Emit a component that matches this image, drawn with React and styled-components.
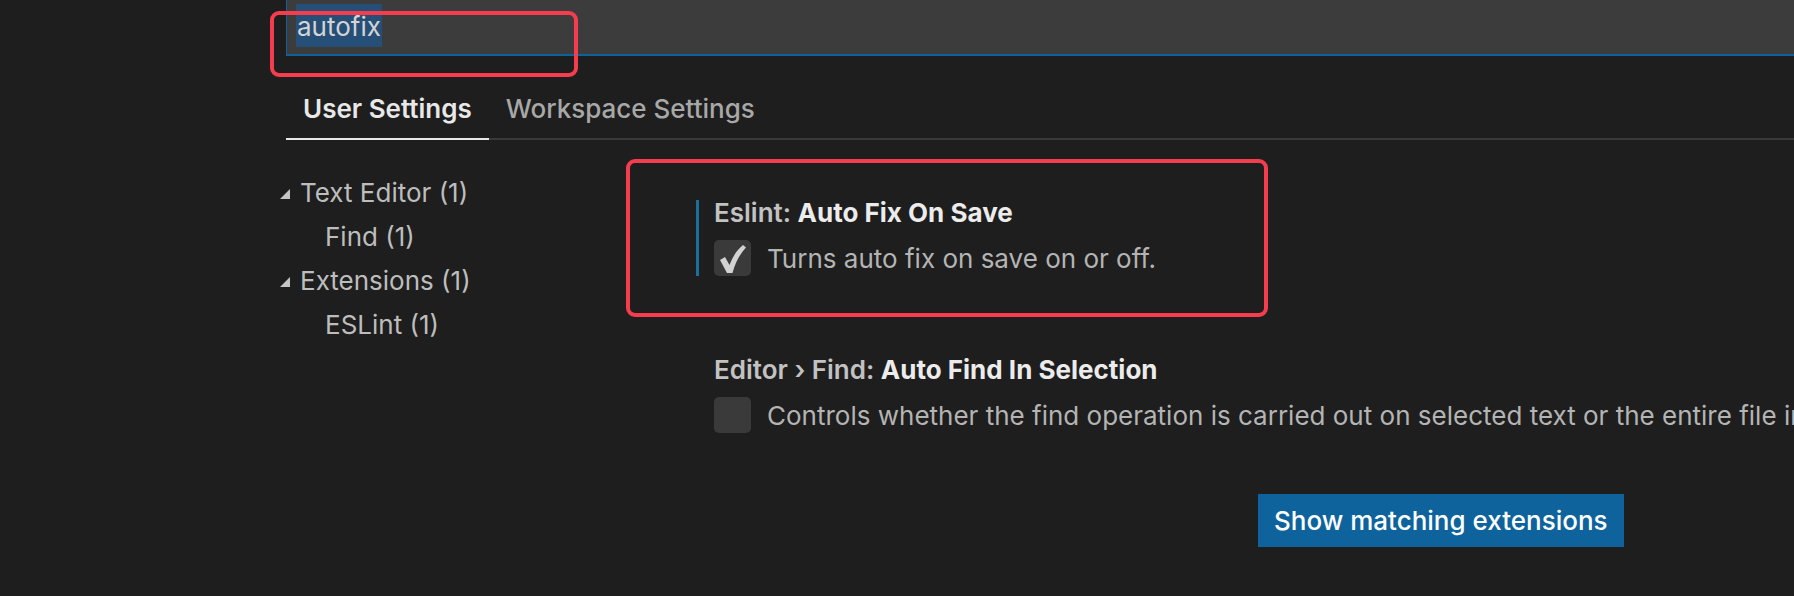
import React from "react";
import styled, { createGlobalStyle } from "styled-components";

const Global = createGlobalStyle`
  html, body {
    margin: 0;
    padding: 0;
    background: #1e1e1e;
  }
  * {
    box-sizing: border-box;
  }
`;

const Page = styled.div`
  position: relative;
  width: 1794px;
  height: 596px;
  overflow: hidden;
  background: #1e1e1e;
  font-family: Inter, "Noto Sans", "Liberation Sans", sans-serif;
  font-size: 26px;
  color: #cccccc;
`;

const SearchBar = styled.div`
  margin-left: 286px;
  height: 56px;
  background: #3c3c3c;
  border-left: 1px solid #0e639c;
  border-bottom: 2px solid #0e639c;
  padding: 4px 0 0 9px;
`;

const Selected = styled.span`
  display: inline-block;
  line-height: 40px;
  padding: 3px 1px 0;
  background: #264f78;
  color: #d4d4d4;
`;

const Tabs = styled.div`
  display: flex;
  margin: 20px 0 0 286px;
  border-bottom: 2px solid #3a3a3a;
`;

const Tab = styled.div`
  height: 64px;
  line-height: 66px;
  padding: 0 17px;
  margin-bottom: -2px;
  color: ${(p) => (p.$active ? "#e8e8e8" : "#a8a8a8")};
  font-weight: ${(p) => (p.$active ? 600 : 500)};
  border-bottom: 2px solid ${(p) => (p.$active ? "#e8e8e8" : "transparent")};
`;

const Body = styled.div`
  display: flex;
  margin-top: 28px;
`;

const Tree = styled.div`
  width: 417px;
  margin-left: 279px;
  padding-top: 2px;
  flex-shrink: 0;
`;

const TreeRow = styled.div`
  display: flex;
  align-items: center;
  height: 44px;
  padding-left: ${(p) => p.$indent}px;
  color: #bdbdbd;
  white-space: nowrap;
`;

const Twistie = styled.svg`
  width: 12px;
  height: 12px;
  margin: 4px 9px 0 0;
  fill: #c5c5c5;
`;

const Main = styled.div`
  display: flex;
  flex-direction: column;
  padding-top: 32px;
  min-width: 0;
`;

const Setting = styled.div`
  display: flex;
  flex-direction: column;
  gap: 14px;
  padding-left: 15px;
  margin-bottom: ${(p) => p.$gap || 0}px;
  border-left: 3px solid ${(p) => (p.$focused ? "#1a6f9f" : "transparent")};
`;

const Title = styled.div`
  line-height: 26px;
  font-weight: 600;
  color: #c2c2c2;
  white-space: nowrap;
  b {
    font-weight: 700;
    color: #ececec;
  }
`;

const Row = styled.div`
  display: flex;
  align-items: center;
  gap: 16px;
  height: 36px;
  white-space: nowrap;
`;

const Box = styled.div`
  width: 37px;
  height: 36px;
  flex-shrink: 0;
  border-radius: 5px;
  background: #3a3a3a;
  display: flex;
  align-items: center;
  justify-content: center;
`;

const Desc = styled.span`
  color: #b4b4b4;
`;

const Button = styled.div`
  align-self: flex-start;
  margin: 61px 0 0 562px;
  height: 53px;
  line-height: 53px;
  padding: 0 16px;
  background: #0e639c;
  color: #ffffff;
  font-weight: 500;
  white-space: nowrap;
`;

const Callout = styled.div`
  position: absolute;
  left: ${(p) => p.$x}px;
  top: ${(p) => p.$y}px;
  width: ${(p) => p.$w}px;
  height: ${(p) => p.$h}px;
  border: 4px solid #f53d4e;
  border-radius: 9px;
  pointer-events: none;
`;

const Check = () => (
  <svg width="36" height="36" viewBox="0 0 36 36">
    <path
      d="M5 20 L10 17 L14.5 25 C18 16 22 10 28 5 L31 7.5 C25 14 20.5 22 17.5 33 L12 33 Z"
      fill="#d2d2d2"
    />
  </svg>
);

const Arrow = () => (
  <Twistie viewBox="0 0 12 12">
    <polygon points="11,1 11,11 1,11" />
  </Twistie>
);

export default function App() {
  return (
    <Page>
      <Global />
      <SearchBar>
        <Selected>autofix</Selected>
      </SearchBar>
      <Tabs>
        <Tab $active>User Settings</Tab>
        <Tab>Workspace Settings</Tab>
      </Tabs>
      <Body>
        <Tree>
          <TreeRow $indent={0}>
            <Arrow />
            Text Editor (1)
          </TreeRow>
          <TreeRow $indent={46}>Find (1)</TreeRow>
          <TreeRow $indent={0}>
            <Arrow />
            Extensions (1)
          </TreeRow>
          <TreeRow $indent={46}>ESLint (1)</TreeRow>
        </Tree>
        <Main>
          <Setting $focused $gap={81}>
            <Title>
              Eslint: <b>Auto Fix On Save</b>
            </Title>
            <Row>
              <Box>
                <Check />
              </Box>
              <Desc>Turns auto fix on save on or off.</Desc>
            </Row>
          </Setting>
          <Setting>
            <Title>
              Editor › Find: <b>Auto Find In Selection</b>
            </Title>
            <Row>
              <Box />
              <Desc>
                Controls whether the find operation is carried out on selected
                text or the entire file in the editor.
              </Desc>
            </Row>
          </Setting>
          <Button>Show matching extensions</Button>
        </Main>
      </Body>
      <Callout $x={270} $y={11} $w={308} $h={66} />
      <Callout $x={626} $y={159} $w={642} $h={158} />
    </Page>
  );
}
